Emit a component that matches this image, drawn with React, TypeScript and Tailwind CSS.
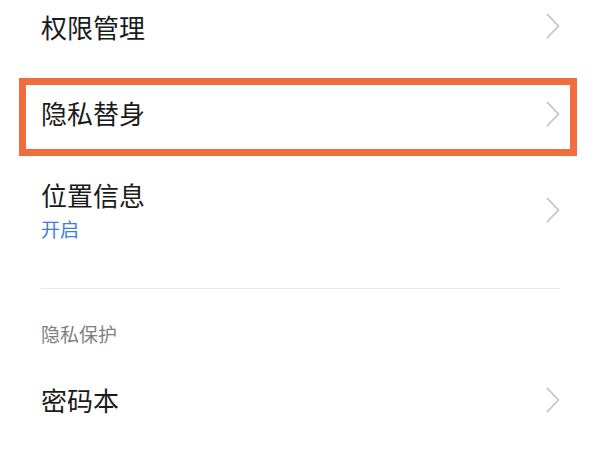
const FONT = "font-['Noto_Sans_CJK_SC','Noto_Sans',sans-serif]"

function Chevron({ className = '' }: { className?: string }) {
  return (
    <svg width="14" height="26" viewBox="0 0 14 26" className={className} fill="none">
      <polyline points="1.5,1.5 12.5,13 1.5,24.5" stroke="#c4c4c4" strokeWidth="1.8" strokeLinecap="round" strokeLinejoin="round" />
    </svg>
  )
}

export default function App() {
  return (
    <div className={`w-[600px] h-[450px] overflow-hidden bg-white text-[#1a1a1a] ${FONT}`}>
      {/* 权限管理 */}
      <div className="h-[54px] flex items-center justify-between pl-[41px] pr-[40px]">
        <span className="text-[26px] leading-[32px]">权限管理</span>
        <Chevron className="-mt-[2px]" />
      </div>

      {/* highlighted row */}
      <div className="mt-[24px] ml-[19px] mr-[23px] h-[78px] border-[7px] border-[#f26d3d] flex items-center justify-between pl-[15px] pr-[10px] pb-[8px]">
        <span className="text-[26px] leading-[32px]">隐私替身</span>
        <Chevron className="mt-[1px]" />
      </div>

      {/* 位置信息 */}
      <div className="h-[132px] flex items-start justify-between pl-[41px] pr-[40px] pt-[23px]">
        <div className="flex flex-col">
          <span className="text-[26px] leading-[32px]">位置信息</span>
          <span className="mt-[6px] text-[19px] leading-[24px] text-[#3b7dd8]">开启</span>
        </div>
        <Chevron className="mt-[18px]" />
      </div>

      <div className="h-px bg-[#e6e6e6] ml-[41px] mr-[40px]" />

      <div className="mt-[33px] pl-[41px] text-[19px] leading-[24px] text-[#808080]">隐私保护</div>

      {/* 密码本 */}
      <div className="mt-[38px] flex items-center justify-between pl-[41px] pr-[40px]">
        <span className="text-[26px] leading-[32px]">密码本</span>
        <Chevron />
      </div>
    </div>
  )
}
